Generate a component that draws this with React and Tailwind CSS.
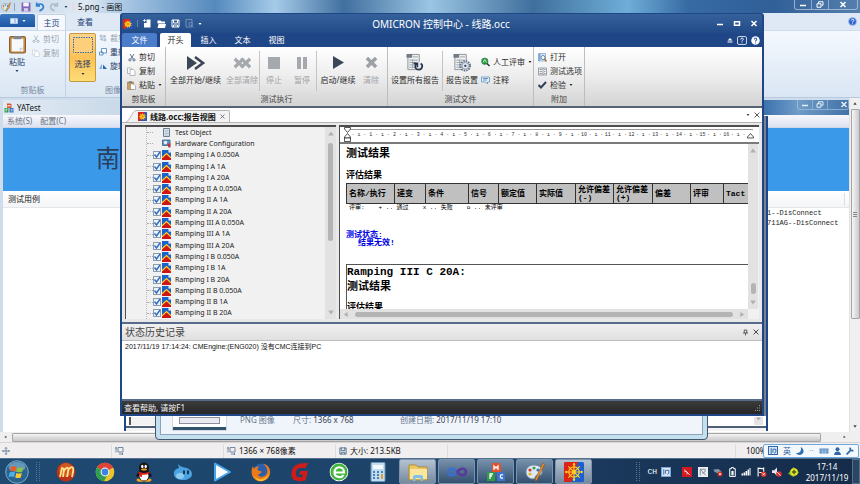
import React from "react";

const FlowerIcon = ({ className }) => (
  <svg viewBox="0 0 20 20" className={className} aria-hidden="true">
    <rect width="20" height="20" rx="1" fill="#2a52b8" />
    <path d="M0 1 Q0 0 1 0H15L5 20H1Q0 20 0 19Z" fill="#d8261c" />
    <path d="M10 2l1.600 4.200L15 3.600l-.6 4.200L18.400 8 15 10.500 18 14l-4.200-.6.2 4.400-3.200-3L8 18l-.8-4.200L3 15.400 4.800 11.400 1.500 9.500 5.600 8 4 4l4 2z" fill="#ffc61e" />
    <circle cx="10" cy="10" r="2.200" fill="#f07818" />
  </svg>
);

const WheelIcon = ({ className }) => (
  <svg viewBox="0 0 20 20" className={className} aria-hidden="true">
    <rect width="20" height="20" rx="1.500" fill="#1d5fd0" />
    <path d="M0 1.500Q0 0 1.500 0H14L7 20H1.500Q0 20 0 18.500Z" fill="#de2216" />
    <g fill="none" stroke="#ffcf20" strokeWidth="1.200">
      <circle cx="10" cy="10" r="5.200" />
      <path d="M10 2v16M2 10h16M4.300 4.300l11.400 11.400M15.700 4.300L4.300 15.700" />
    </g>
    <g fill="#ffcf20">
      <circle cx="10" cy="2.300" r="1.200" /><circle cx="10" cy="17.700" r="1.200" /><circle cx="2.300" cy="10" r="1.200" /><circle cx="17.700" cy="10" r="1.200" />
      <circle cx="10" cy="10" r="1.800" />
    </g>
  </svg>
);

const RampIcon = () => (
  <svg viewBox="0 0 18 20" className="h-[10px] w-[9px] shrink-0" aria-hidden="true">
    <path d="M0 0h13l5 5v15H0z" fill="#1763c9" />
    <path d="M13 0v5h5z" fill="#fff" />
    <path d="M0 15L9 6l9 9v5H0z" fill="#cf1616" />
    <path d="M0 15.500L9 7l9 8.500" fill="none" stroke="#ffd42a" strokeWidth="2.200" />
  </svg>
);

const CutIcon = ({ className, color = "#3d5878" }) => (
  <svg viewBox="0 0 16 16" className={className} fill="none" stroke={color} strokeWidth="1.600" aria-hidden="true">
    <path d="M4 1l6.500 10M12 1L5.500 11" />
    <circle cx="3.800" cy="12.800" r="2.200" />
    <circle cx="12" cy="12.800" r="2.200" />
  </svg>
);

const CopyIcon = ({ className, color = "#8b8f96" }) => (
  <svg viewBox="0 0 18 18" className={className} fill="#fff" stroke={color} strokeWidth="1.200" aria-hidden="true">
    <path d="M1 2h7l3 3v8H1z" />
    <path d="M6 5h7l3 3v9H6z" />
  </svg>
);

const PasteIcon = ({ className }) => (
  <svg viewBox="0 0 16 18" className={className} aria-hidden="true">
    <rect x="0.500" y="2" width="15" height="15.500" rx="1.500" fill="#c98d4c" stroke="#8a5d2c" />
    <rect x="2.500" y="4" width="11" height="12" fill="#f7fafd" />
    <path d="M4.500 1.500h7v3h-7z" fill="#7d8793" />
    <path d="M10 16l3.500-3.500H10z" fill="#c4d2e0" />
  </svg>
);

const SmallPasteIcon = ({ className }) => (
  <svg viewBox="0 0 18 18" className={className} aria-hidden="true">
    <path d="M1 2h12v15H1z" fill="#c9a15f" stroke="#8e6e38" />
    <path d="M4 1h6v3H4z" fill="#6b7480" />
    <path d="M7 6h6l4 4v7H7z" fill="#fff" stroke="#777" />
  </svg>
);

const Caret = ({ className = "" }) => (
  <svg viewBox="0 0 6 4" className={`h-[2px] w-[4px] ${className}`} fill="currentColor" aria-hidden="true">
    <path d="M0 0h6L3 4z" />
  </svg>
);

const Arrow = ({ dir, className = "h-[5px] w-[6px]" }) => {
  const d = { up: "M0 8L5 1l5 7z", down: "M0 1h10L5 8z", left: "M8 0v9L1 4.500z", right: "M2 0v9l7-4.500z" }[dir];
  return (
    <svg viewBox="0 0 10 9" className={className} fill="currentColor" aria-hidden="true">
      <path d={d} />
    </svg>
  );
};

const WinGlyph = ({ kind, className = "h-[7px] w-[8px]" }) => (
  <svg viewBox="0 0 16 14" className={className} fill="none" stroke="currentColor" strokeWidth="3" aria-hidden="true">
    {kind === "min" && <path d="M2 9h12" />}
    {kind === "max" && <path d="M3 3.500h10v7H3z" />}
    {kind === "restore" && <path d="M5 5V1.500h9v7h-3M2 5.500h8v7H2z" strokeWidth="2" />}
    {kind === "close" && <path d="M3 2l10 10M13 2L3 12" />}
  </svg>
);

const HelpBall = ({ className }) => (
  <svg viewBox="0 0 18 18" className={className} aria-hidden="true">
    <circle cx="9" cy="9" r="8" fill="#2f63cf" stroke="#b9cdf0" strokeWidth="1.500" />
    <path d="M6.500 7c0-3.600 5.400-3.200 5.200-.2C11.600 8.600 9 8.800 9 11" fill="none" stroke="#fff" strokeWidth="2" />
    <circle cx="9" cy="13.500" r="1.200" fill="#fff" />
  </svg>
);

const PaletteIcon = ({ className }) => (
  <svg viewBox="0 0 20 20" className={className} aria-hidden="true">
    <path d="M9 3c6 0 9 4 8 8-1 3-3 2-5 2s-1 4-4 4c-4 0-7-3-7-7s3-7 8-7z" fill="#dceaf6" stroke="#6d8aa6" />
    <circle cx="5" cy="8" r="1.600" fill="#d8352a" />
    <circle cx="9" cy="6" r="1.600" fill="#3aa244" />
    <circle cx="13" cy="8" r="1.600" fill="#2c6fd0" />
    <circle cx="5" cy="12" r="1.600" fill="#edb51d" />
    <path d="M18 1l1.500 1.500L12 18l-2 1 .5-2.500z" fill="#e8912c" stroke="#8b5517" strokeWidth=".6" />
  </svg>
);

const BlocksIcon = ({ className }) => (
  <svg viewBox="0 0 20 20" className={className} aria-hidden="true">
    <path d="M6 1h7l2 2v7H6z" fill="#e2502c" />
    <path d="M1 10h8v9H1z" fill="#2f9a48" />
    <path d="M11 10h7l1 1v8h-8z" fill="#3c74cf" />
    <path d="M8 8V4l2 2 2-2v4M4 17v-5h3M4 14h2M17 13c-3-2-4 4 0 3" fill="none" stroke="#fff" strokeWidth="1.300" />
  </svg>
);

const SizeIcon = ({ className }) => (
  <svg viewBox="0 0 18 18" className={className} fill="none" stroke="#4a6a8c" strokeWidth="1.500" aria-hidden="true">
    <path d="M2 13V3M0.500 5L2 2.500 3.500 5M6 3h10v9H6zM8 16h8M14 14l2 2-2 1.500" />
  </svg>
);

const DiskIcon = ({ className, color }) => (
  <svg viewBox="0 0 18 18" className={className} fill="none" stroke={color} strokeWidth="2" aria-hidden="true">
    <path d="M2 2h14v14H2zM5 2v6h8V2M5 16v-4h8v4" />
  </svg>
);

function PaintTitle() {
  return (
    <header className="flex h-[13px] shrink-0 items-center bg-[linear-gradient(90deg,#c7d9ea_0%,#dde8f2_10%,#a4c4e2_15%,#5589bd_25%,#a5cbe8_32%,#416f9f_40%,#9bc5e3_50%,#3f6f9d_62%,#6faed8_73%,#376aa3_80%,#315f98_90%,#557fae_100%)] pr-[2px] pl-px">
      <PaletteIcon className="h-[10px] w-[10px]" />
      <span className="ml-[3px] h-[8px] w-px bg-slate-400" />
      <button aria-label="保存" className="ml-[6px]">
        <svg viewBox="0 0 18 18" className="h-[10px] w-[10px]" aria-hidden="true">
          <path d="M1 1h16v16H1z" fill="#8163b8" />
          <path d="M4 1h10v7H4z" fill="#f4f2fb" />
          <path d="M5 11h8v6H5z" fill="#d4c9e8" />
        </svg>
      </button>
      <button aria-label="撤销" className="ml-[4px]">
        <svg viewBox="0 0 18 18" className="h-[10px] w-[10px]" fill="none" stroke="#2f7fd4" strokeWidth="3" aria-hidden="true">
          <path d="M3 1v6h6M3 6c7-5 13-1 12 4-1 4-4 5-7 6" />
        </svg>
      </button>
      <button aria-label="重做" className="ml-[4px]">
        <svg viewBox="0 0 18 18" className="h-[10px] w-[10px]" fill="none" stroke="#aebccb" strokeWidth="3" aria-hidden="true">
          <path d="M15 1v6H9M15 6C8 1 2 5 3 10c1 4 4 5 7 6" />
        </svg>
      </button>
      <button aria-label="自定义快速访问工具栏" className="ml-[5px] text-slate-700">
        <Caret />
      </button>
      <span className="ml-[5px] h-[8px] w-px bg-rose-200" />
      <h1 className="ml-[4px] whitespace-nowrap text-[#111]">5.png - 画图</h1>
      <div className="ml-auto flex h-[10px] w-[64px] self-start rounded-b-[3px] border border-t-0 border-[#bcd0e6]/70 text-white">
        <button aria-label="最小化" className="flex flex-1 items-center justify-center border-r border-[#bcd0e6]/60"><WinGlyph kind="min" /></button>
        <button aria-label="还原" className="flex flex-1 items-center justify-center border-r border-[#bcd0e6]/60"><WinGlyph kind="restore" /></button>
        <button aria-label="关闭" className="flex w-[28px] items-center justify-center"><WinGlyph kind="close" /></button>
      </div>
    </header>
  );
}

function PaintRibbon() {
  return (
    <>
      <nav className="flex h-[18px] shrink-0 items-end border-b border-[#cddcec] bg-[#dfe9f5]">
        <button aria-label="画图菜单" className="mb-[3px] flex h-[13px] w-[35px] items-center justify-center gap-[4px] self-end rounded-t-[2px] bg-gradient-to-b from-[#3b78c0] to-[#1d56a3] text-white">
          <svg viewBox="0 0 16 12" className="h-[6px] w-[8px]" fill="#dcebfb" aria-hidden="true"><path d="M0 0h16v12H0zM10 2v8" stroke="#5d8cc0" strokeWidth="1.500" /></svg>
          <Caret />
        </button>
        <button className="ml-[2px] h-[16px] w-[29px] rounded-t-[2px] border border-b-0 border-[#c3d3e6] bg-[#f5f9fe] text-[#1e3f77]">主页</button>
        <button className="ml-[4px] h-[16px] w-[30px] text-[#1e3f77]">查看</button>
        <button aria-label="帮助" className="mr-[3px] ml-auto self-center"><HelpBall className="h-[9px] w-[9px]" /></button>
      </nav>
      <div className="flex h-[67px] shrink-0 overflow-hidden border-b border-[#b7c9de] bg-gradient-to-b from-[#f5f9fe] via-[#e6eff9] to-[#dbe6f4] text-[#1e3a63]">
        <section className="flex w-[66px] shrink-0 flex-col border-r border-[#c4d2e2]">
          <div className="flex flex-1 gap-[3px] pt-[3px] pl-[5px]">
            <button className="flex w-[24px] flex-col items-center gap-[3px]">
              <PasteIcon className="h-[20px] w-[17px]" />
              <span className="whitespace-nowrap">粘贴</span>
              <Caret />
            </button>
            <div className="flex flex-col gap-[4px] text-[#9aa3ae]">
              <button className="flex h-[10px] items-center gap-[3px] whitespace-nowrap" disabled><CutIcon className="h-[8px] w-[8px]" color="#9fb0c2" />剪切</button>
              <button className="flex h-[10px] items-center gap-[3px] whitespace-nowrap" disabled><CopyIcon className="h-[8px] w-[8px]" color="#b4bfcb" />复制</button>
            </div>
          </div>
          <span className="pb-[2px] text-center text-[#7487a0]">剪贴板</span>
        </section>
        <section className="flex w-[59px] shrink-0 flex-col overflow-hidden">
          <div className="flex flex-1 gap-[3px] pt-[2px] pl-[3px]">
            <button className="flex h-[49px] w-[27px] shrink-0 flex-col items-center gap-[4px] rounded-[2px] border border-[#c79a3d] bg-gradient-to-b from-[#fbd48c] via-[#fcc257] to-[#fddc76] pt-[3px]">
              <svg viewBox="0 0 20 16" className="h-[16px] w-[20px] shrink-0" aria-hidden="true"><rect x=".5" y=".5" width="19" height="15" fill="#fdcf7d" stroke="#3b6ea8" strokeDasharray="1.500 1" /></svg>
              <span className="mt-[2px] whitespace-nowrap">选择</span>
              <Caret />
            </button>
            <div className="flex flex-col gap-[4px]">
              <button className="flex h-[10px] items-center gap-[3px] whitespace-nowrap text-[#9aa3ae]" disabled>
                <svg viewBox="0 0 16 16" className="h-[8px] w-[8px]" fill="none" stroke="#8fa3b8" strokeWidth="1.500" aria-hidden="true"><path d="M4 1v11h11M1 4h11v11M4 12L13 2" /></svg>裁剪
              </button>
              <button className="flex h-[10px] items-center gap-[3px] whitespace-nowrap">
                <svg viewBox="0 0 16 16" className="h-[8px] w-[8px]" fill="#fff" stroke="#3f78b5" strokeWidth="1.500" aria-hidden="true"><path d="M5 1h10v9H5zM1 8h7v6H1z" /></svg>重新
              </button>
              <button className="flex h-[10px] items-center gap-[3px] whitespace-nowrap">
                <svg viewBox="0 0 16 16" className="h-[8px] w-[8px]" aria-hidden="true"><path d="M0 14L6 3v11z" fill="#7fb2e2" /><path d="M8 14V5l8 9z" fill="#2b66a6" /></svg>旋转
              </button>
            </div>
          </div>
          <span className="pb-[2px] pl-[39px] whitespace-nowrap text-[#7487a0]">图像</span>
        </section>
      </div>
    </>
  );
}

function YaTest() {
  return (
    <section className="flex min-w-0 flex-1 flex-col bg-white">
      <header className="flex h-[15px] shrink-0 items-center bg-[linear-gradient(90deg,#e2ebf4_0%,#c9d9e8_14%,#6c9bca_50%,#3d73ae_90%,#6f9cc8_94%,#4272a8_100%)] pl-[1px]">
        <BlocksIcon className="h-[10px] w-[10px]" />
        <h2 className="ml-[3px] text-[#151515]">YATest</h2>
        <div className="ml-auto flex h-[10px] w-[52px] self-start rounded-b-[3px] border border-t-0 border-[#a9c1da]/70 text-[#e6eef7]">
          <button aria-label="最小化" className="flex flex-1 items-center justify-center"><WinGlyph kind="min" /></button>
          <button aria-label="还原" className="flex flex-1 items-center justify-center border-x border-[#a9c1da]/60"><WinGlyph kind="restore" /></button>
          <button aria-label="关闭" className="flex w-[20px] items-center justify-end"><WinGlyph kind="close" /></button>
        </div>
      </header>
      <nav className="flex h-[13px] shrink-0 items-center gap-[8px] border-b border-[#cfd5e8] bg-gradient-to-b from-[#f7f8fd] to-[#dde2f1] pl-[4px] text-[#6d7480]">
        <button>系统(S)</button>
        <button>配置(C)</button>
      </nav>
      <div className="flex h-[63px] shrink-0 items-center bg-[#3a99e9] pb-[6px] pl-[93px] font-['Noto_Sans_CJK_SC',sans-serif] text-[24px] text-[#2b3f5c]">南</div>
      <div className="flex h-[17px] shrink-0 items-center border-b border-[#e3e6ea] bg-gradient-to-b from-white to-[#f4f5f7] pl-[5px] text-[#111]">
        测试用例
        <span className="mr-[4px] ml-auto h-[13px] w-px bg-[#dcdfe4]" />
      </div>
      <ul className="flex w-[84px] flex-col self-end font-['Liberation_Mono',monospace] text-[7px] leading-[10px] text-[#222]">
        <li className="pl-[2px]">1--DisConnect</li>
        <li className="pl-[2px]">711AG--DisConnect</li>
      </ul>
    </section>
  );
}

function PaintWindow() {
  return (
    <div className="flex min-h-0 flex-1 flex-col bg-[#c8d4e4]">
      <PaintTitle />
      <PaintRibbon />
      <div className="flex min-h-0 flex-1">
        <div className="flex min-w-0 flex-1 border-t-2 border-l-[3px] border-[#cfdcec]"><YaTest /></div>
        <div className="flex w-[11px] flex-col items-center border-l border-[#e2e2e2] bg-[#f0f0f0] py-[4px] text-[#444]">
          <Arrow dir="up" className="h-[3px] w-[4px]" />
          <div className="mt-[4px] flex h-[210px] w-[9px] flex-col items-center justify-center gap-px rounded-[1px] border border-[#a5a5a5] bg-gradient-to-r from-[#f6f6f6] to-[#cbcbcf]">
            <span className="h-px w-[4px] bg-[#888]" /><span className="h-px w-[4px] bg-[#888]" /><span className="h-px w-[4px] bg-[#888]" />
          </div>
          <Arrow dir="down" className="mt-auto h-[3px] w-[4px]" />
        </div>
      </div>
      <div className="flex h-[10px] shrink-0 items-center bg-[#efefef] pl-[4px] text-[#444]">
        <Arrow dir="left" className="h-[4px] w-[3px]" />
        <div className="ml-[5px] h-[9px] flex-1 rounded-[1px] border border-[#a5a5a5] bg-gradient-to-b from-[#f5f5f5] to-[#c6c6c9]" />
        <Arrow dir="right" className="mr-[14px] ml-[22px] h-[4px] w-[3px]" />
      </div>
      <footer className="flex h-[16px] shrink-0 items-center border-t border-[#d7d5d5] bg-[#f0eeee] text-[#111]">
        <div className="flex h-[14px] w-[112px] items-center border-r border-[#dedcdc] pl-[2px]">
          <svg viewBox="0 0 16 16" className="h-[8px] w-[8px]" fill="none" stroke="#4a6a8c" strokeWidth="1.500" aria-hidden="true"><path d="M8 1v14M1 8h14M6 3l2-2 2 2M6 13l2 2 2-2M3 6L1 8l2 2M13 6l2 2-2 2" /></svg>
        </div>
        <div className="flex h-[14px] w-[112px] items-center border-r border-[#dedcdc] pl-[3px]"><SizeIcon className="h-[9px] w-[9px]" /></div>
        <div className="flex h-[14px] w-[112px] items-center gap-[3px] border-r border-[#dedcdc] pl-[3px]"><SizeIcon className="h-[9px] w-[9px]" />1366 × 768像素</div>
        <div className="flex h-[14px] w-[112px] items-center gap-[3px] border-r border-[#dedcdc] pl-[3px]"><DiskIcon className="h-[8px] w-[8px]" color="#4a6a8c" />大小: 213.5KB</div>
        <div className="ml-auto flex h-[14px] w-[28px] items-center justify-end border-l border-[#dedcdc]"><span className="w-[17px] overflow-hidden">100%</span></div>
        <div className="mr-px flex h-[14px] w-[96px] items-center justify-between rounded-[2px] border border-[#6fa8dc] bg-[#f3f8fd] px-[4px] text-[#2a5f9e]">
          <span className="flex h-[9px] w-[10px] items-center justify-center border border-[#2f66a8] bg-[#d6e6f6]">
            <svg viewBox="0 0 12 10" className="h-[6px] w-[7px]" fill="none" stroke="#2a5f9e" strokeWidth="1.500" aria-hidden="true"><path d="M2 0v10M5 2h5v5L7 9M5 2v6" /></svg>
          </span>
          <span>英</span>
          <svg viewBox="0 0 12 12" className="h-[8px] w-[8px]" fill="#2f6db3" aria-hidden="true"><path d="M7 0c6 3 6 11-1 12-3 0-5-1-6-3 5 1 9-3 7-9z" /></svg>
          <span className="text-[#9ab]">··</span>
          <svg viewBox="0 0 18 12" className="h-[6px] w-[10px]" fill="#5c8fc4" aria-hidden="true"><path d="M0 1h18v10H0z" /><path d="M2 4h14M2 6.500h14M5 9h8" stroke="#fff" strokeDasharray="2 1" /></svg>
          <svg viewBox="0 0 12 14" className="h-[8px] w-[7px]" fill="#2f66a8" aria-hidden="true"><circle cx="6" cy="4" r="3.500" /><path d="M0 14c0-8 12-8 12 0z" /></svg>
          <svg viewBox="0 0 14 14" className="h-[8px] w-[8px]" fill="none" stroke="#2f66a8" strokeWidth="3" aria-hidden="true"><path d="M1 13l7-7M8 1c-2 4 1 6 5 5" /></svg>
        </div>
      </footer>
    </div>
  );
}

const BigButton = ({ label, icon, className, disabled }) => (
  <button disabled={disabled} className={`flex flex-col items-center gap-[3px] pt-[6px] whitespace-nowrap ${disabled ? "text-[#a0a3a8]" : "text-[#2b2b2b]"} ${className}`}>
    <span className="flex h-[19px] items-center">{icon}</span>
    <span>{label}</span>
  </button>
);

const SmallButton = ({ label, icon, caret }) => (
  <button className="flex h-[12px] items-center gap-[3px] whitespace-nowrap text-[#2b2b2b]">
    <span className="flex w-[9px] justify-center">{icon}</span>
    {label}
    {caret && <Caret />}
  </button>
);

const Sep = () => <span className="mt-[4px] h-[40px] w-px bg-[#c4c4c4]" />;

const Group = ({ label, className, children }) => (
  <section className={`flex shrink-0 flex-col border-r border-[#bdbdbd] ${className}`}>
    <div className="flex min-h-0 flex-1">{children}</div>
    <h3 className="pb-[2px] text-center text-[#444]">{label}</h3>
  </section>
);

const XShape = ({ x = 0 }) => <path d={`M${x + 2} 5l3-3 4 4 4-4 3 3-4 4 4 4-3 3-4-4-4 4-3-3 4-4z`} />;

const ReportGlyph = ({ gear }) => (
  <svg viewBox="0 0 20 20" className="h-[19px] w-[20px]" fill="none" aria-hidden="true">
    <path d="M2.500 1.500h12v16h-12z" fill="#eceef0" stroke="#8d939a" />
    <path d="M1 1h6v4H1z" fill="#747b84" />
    <path d="M8 4h5M4 7.500h9M4 10h9M4 12.500h9M4 15h9M7.500 7v9" stroke="#8d939a" strokeWidth=".8" />
    {gear ? (
      <g>
        <circle cx="13.500" cy="13.500" r="5" fill="#eef1f4" stroke="#5c6f84" strokeWidth="2" strokeDasharray="1.600 1" />
        <circle cx="13.500" cy="13.500" r="3.500" fill="#dfe6ed" stroke="#5c6f84" strokeWidth=".6" />
        <circle cx="13.500" cy="13.500" r="1.200" fill="#26384e" />
      </g>
    ) : (
      <g>
        <circle cx="14" cy="14" r="5" fill="#e8eaec" />
        <path d="M16 11c3 2 1.500 6.500-2 6.500-4 0-5-4-2.500-6.500M8.500 11h4v4" stroke="#26384e" strokeWidth="1.800" />
      </g>
    )}
  </svg>
);

function OmicronRibbon() {
  return (
    <div className="flex h-[59px] shrink-0 overflow-hidden bg-gradient-to-b from-white via-[#ededed] to-[#d3d3d3]">
      <Group label="剪贴板" className="w-[44px]">
        <div className="flex flex-col gap-[2px] pt-[4px] pl-[5px]">
          <SmallButton label="剪切" icon={<CutIcon className="h-[9px] w-[8px]" />} />
          <SmallButton label="复制" icon={<CopyIcon className="h-[9px] w-[9px]" />} />
          <SmallButton label="粘贴" caret icon={<SmallPasteIcon className="h-[9px] w-[9px]" />} />
        </div>
      </Group>
      <Group label="测试执行" className="w-[222px]">
        <BigButton label="全部开始/继续" className="w-[59px]" icon={<svg viewBox="0 0 20 14" className="h-[14px] w-[20px]" aria-hidden="true"><path d="M1 0l10 7-10 7z" fill="#3b4757" /><path d="M9 1l8 6-8 6" fill="none" stroke="#3b4757" strokeWidth="2.600" /></svg>} />
        <BigButton disabled label="全部清除" className="w-[34px]" icon={<svg viewBox="0 0 26 18" className="h-[14px] w-[20px]" fill="#a5a9ae" aria-hidden="true"><XShape /><XShape x={9} /></svg>} />
        <Sep />
        <BigButton disabled label="停止" className="w-[28px]" icon={<svg viewBox="0 0 12 12" className="h-[12px] w-[12px]" aria-hidden="true"><path d="M0 0h12v12H0z" fill="#a5a9ae" /></svg>} />
        <BigButton disabled label="暂停" className="w-[28px]" icon={<svg viewBox="0 0 10 12" className="h-[12px] w-[10px]" aria-hidden="true"><path d="M0 0h4v12H0zM6 0h4v12H6z" fill="#a5a9ae" /></svg>} />
        <Sep />
        <BigButton label="启动/继续" className="w-[42px]" icon={<svg viewBox="0 0 12 14" className="h-[13px] w-[11px]" aria-hidden="true"><path d="M0 0l12 7-12 7z" fill="#3b4757" /></svg>} />
        <BigButton disabled label="清除" className="w-[24px]" icon={<svg viewBox="0 0 18 18" className="h-[15px] w-[15px]" fill="#9da1a6" aria-hidden="true"><XShape /></svg>} />
      </Group>
      <Group label="测试文件" className="w-[146px]">
        <BigButton label="设置所有报告" className="w-[54px]" icon={<ReportGlyph />} />
        <Sep />
        <BigButton label="报告设置" className="w-[38px]" icon={<ReportGlyph gear />} />
        <div className="flex flex-col gap-[6px] pt-[9px]">
          <SmallButton label="人工评审" caret icon={<svg viewBox="0 0 18 18" className="h-[10px] w-[10px]" fill="none" aria-hidden="true"><circle cx="7.500" cy="7.500" r="6.500" fill="#2d9a45" stroke="#1b7431" /><path d="M4 10l3.500-6L11 10" stroke="#d7f3dc" strokeWidth="1.800" /><path d="M12 12l5 5" stroke="#333" strokeWidth="3" /></svg>} />
          <SmallButton label="注释" icon={<svg viewBox="0 0 18 16" className="h-[9px] w-[10px]" aria-hidden="true"><path d="M1 1h16v10h-4v4l-4-4H1z" fill="#e7f1fb" stroke="#5b8cc0" strokeWidth="1.500" /><path d="M4 4h10M4 7h8" stroke="#3f77b2" strokeWidth="1.500" /></svg>} />
        </div>
      </Group>
      <Group label="附加" className="w-[51px]">
        <div className="flex flex-col gap-[2px] pt-[4px] pl-[4px]">
          <SmallButton label="打开" icon={<svg viewBox="0 0 18 18" className="h-[9px] w-[9px]" fill="none" aria-hidden="true"><path d="M1 1h14v15H1z" fill="#d8e8f6" stroke="#4d80b4" /><path d="M1 1h4v15H1z" fill="#78a9d8" /><circle cx="10" cy="9" r="4" fill="#fff" stroke="#44617e" strokeWidth="1.500" /><path d="M13 12l4 5" stroke="#a0672c" strokeWidth="2.500" /></svg>} />
          <SmallButton label="测试选项" icon={<svg viewBox="0 0 18 18" className="h-[9px] w-[9px]" fill="none" stroke="#777f89" strokeWidth="1.400" aria-hidden="true"><path d="M1 2h16v14H1zM10 2v14M3 5h5M3 9h5M3 13h5M12 5h3M12 9h3M12 13h3" /></svg>} />
          <SmallButton label="检验" caret icon={<svg viewBox="0 0 18 16" className="h-[8px] w-[9px]" fill="none" stroke="#334055" strokeWidth="4" aria-hidden="true"><path d="M1 8l5 5L16 2" /></svg>} />
        </div>
      </Group>
    </div>
  );
}

const treeItems = [
  "Ramping I A 0.050A", "Ramping I A 1A", "Ramping I A 20A",
  "Ramping II A 0.050A", "Ramping II A 1A", "Ramping II A 20A",
  "Ramping III A 0.050A", "Ramping III A 1A", "Ramping III A 20A",
  "Ramping I B 0.050A", "Ramping I B 1A", "Ramping I B 20A",
  "Ramping II B 0.050A", "Ramping II B 1A", "Ramping II B 20A",
];

function Tree() {
  return (
    <aside className="flex w-[211px] shrink-0 border-t-2 border-l border-[#4d4d4d] bg-[#f1f1f1]">
      <ul className="ml-[20px] flex flex-1 flex-col border-l border-dotted border-[#bbb] text-[7px] text-[#1a1a1a]">
        <li className="flex min-h-0 flex-1 items-center">
          <span className="mr-[9px] w-[6px] border-t border-dotted border-[#aaa]" />
          <svg viewBox="0 0 14 18" className="mr-[5px] ml-px h-[9px] w-[7px]" aria-hidden="true"><path d="M1 1h12v16H1z" fill="#d9e6ef" stroke="#6d7f8e" strokeWidth="2" /><path d="M3 5h8M3 8h8M3 11h8M3 14h8" stroke="#8fa2b2" /></svg>
          Test Object
        </li>
        <li className="flex min-h-0 flex-1 items-center">
          <span className="mr-[9px] w-[6px] border-t border-dotted border-[#aaa]" />
          <svg viewBox="0 0 18 18" className="mr-[4px] h-[9px] w-[9px]" aria-hidden="true"><path d="M1 2h15v11H1z" fill="#5d95c9" stroke="#33597f" strokeWidth="1.500" /><circle cx="7" cy="7" r="3.500" fill="#e9f3fb" /><path d="M10 9h7v8h-4z" fill="#bf3440" /></svg>
          Hardware Configuration
        </li>
        {treeItems.map((t) => (
          <li key={t} className="flex min-h-0 flex-1 items-center">
            <span className="w-[6px] border-t border-dotted border-[#aaa]" />
            <label className="flex items-center whitespace-nowrap">
              <span className="relative mr-px flex">
                <input type="checkbox" defaultChecked className="h-[8px] w-[8px] appearance-none border border-[#8f9cab] bg-[#eef3f8]" />
                <svg viewBox="0 0 16 16" className="pointer-events-none absolute inset-0 h-[8px] w-[8px]" fill="none" stroke="#2f6ec4" strokeWidth="2.800" aria-hidden="true"><path d="M3 7l4 5 7-10" /></svg>
              </span>
              <RampIcon />
              <span className="ml-[4px]">{t}</span>
            </label>
          </li>
        ))}
      </ul>
      <div className="flex w-[11px] flex-col items-center bg-[#e2e2e2] py-[4px] text-[#b0b0b0]">
        <Arrow dir="up" />
        <div className="mt-[7px] h-[98px] w-[5px] rounded-full bg-[#b4b4b4]" />
        <Arrow dir="down" className="mt-auto h-[5px] w-[6px]" />
      </div>
    </aside>
  );
}

const columns = [
  ["名称/执行", "w-[48px]"], ["递变", "w-[31px]"], ["条件", "w-[43px]"], ["信号", "w-[30px]"],
  ["额定值", "w-[38px]"], ["实际值", "w-[39px]"], ["允许偏差 (-)", "w-[38px]"], ["允许偏差 (+)", "w-[39px]"],
  ["偏差", "w-[38px]"], ["评审", "w-[33px]"], ["Tact", "w-[29px]"],
];

const Marker = ({ right }) => (
  <svg viewBox="0 0 14 30" className={`absolute top-0 h-[15px] w-[7px] ${right ? "right-[5px]" : "left-[4px]"}`} fill="#fff" stroke="#222" strokeWidth="1.500" aria-hidden="true">
    {!right && <path d="M1 1h12v3L7 11 1 4z" />}
    <path d="M7 13l6 7v2H1v-2z" />
    {!right && <path d="M1 22h12v7H1z" />}
  </svg>
);

function Report() {
  return (
    <main className="flex min-w-0 flex-1 flex-col overflow-hidden border-t-2 border-l border-[#4d4d4d] bg-[#f1f1f1] font-['Liberation_Mono','Noto_Sans_CJK_SC',monospace] text-black">
      <div className="relative shrink-0 border-b-2 border-[#7a7a7a] bg-white py-[2px] pr-[6px] pl-[8px]">
        <div className="flex h-[11px] items-center border-t border-[#999] pl-[2px] text-[5px] leading-[8px] text-[#333]">
          {Array.from({ length: 17 }, (_, i) => (
            <div key={i} className="grid flex-1 grid-cols-4 text-center">
              <span>·</span><span>ı</span><span>·</span><span>{i < 16 ? i + 1 : ""}</span>
            </div>
          ))}
        </div>
        <Marker />
        <Marker right />
      </div>
      <div className="flex min-h-0 flex-1">
        <article className="flex min-w-0 flex-1 flex-col overflow-hidden bg-white pl-[6px]">
          <h2 className="mt-[3px] text-[11px] leading-[14px] font-bold">测试结果</h2>
          <h3 className="mt-[10px] text-[9px] leading-[11px] font-bold">评估结果</h3>
          <table className="mt-[1px] w-[406px] shrink-0 table-fixed border-collapse bg-[#c0c0c0] text-left leading-[8px]">
            <thead>
              <tr className="h-[20px]">
                {columns.map(([c, w]) => (
                  <th key={c} scope="col" className={`border border-[#333] p-0 pl-[2px] font-bold ${w}`}>{c}</th>
                ))}
              </tr>
            </thead>
          </table>
          <p className="flex gap-[14px] pl-[3px] text-[6px] leading-[8px]">
            <span>评审:</span><span>+ .. 通过</span><span>x .. 失败</span><span>o .. 未评审</span>
          </p>
          <p className="mt-[19px] leading-[8px] font-bold text-[#0000e6]">测试状态:</p>
          <p className="pl-[12px] leading-[8px] font-bold text-[#0000e6]">结果无效!</p>
          <section className="mt-[17px] min-h-0 flex-1 border-t border-l border-[#555]">
            <h2 className="text-[11px] leading-[15px] font-bold">Ramping III C 20A:</h2>
            <h2 className="text-[11px] leading-[14px] font-bold">测试结果</h2>
            <h3 className="mt-[9px] text-[9px] leading-[11px] font-bold">评估结果</h3>
          </section>
        </article>
        <div className="mr-px flex w-[10px] flex-col items-center bg-[#e2e2e2] py-[4px] text-[#b0b0b0]">
          <Arrow dir="up" />
          <div className="mt-auto h-[11px] w-[5px] rounded-full bg-[#b4b4b4]" />
          <Arrow dir="down" className="mt-[6px] h-[5px] w-[6px]" />
        </div>
      </div>
      <div className="mr-[11px] flex h-[10px] shrink-0 items-center bg-[#e2e2e2] px-[3px] text-[#b0b0b0]">
        <Arrow dir="left" />
        <div className="mx-[6px] h-[5px] flex-1 rounded-full bg-[#b4b4b4]" />
        <Arrow dir="right" />
      </div>
    </main>
  );
}

function OmicronWindow() {
  return (
    <div className="absolute top-[13px] right-[96px] bottom-[68px] left-[120px] flex flex-col overflow-hidden rounded-t-[3px] border-2 border-t border-[#1f4687] bg-[#1f4687]">
      <header className="flex h-[19px] shrink-0 items-center bg-gradient-to-b from-[#35619b] to-[#214b88] pl-[1px] text-white">
        <FlowerIcon className="h-[10px] w-[10px]" />
        <span className="ml-[4px] h-[7px] w-px bg-[#6285b5]" />
        <button aria-label="新建" className="ml-[5px]"><svg viewBox="0 0 16 18" className="h-[9px] w-[8px]" fill="#fff" aria-hidden="true"><path d="M7 1h8v16H2V8h5z" /><path d="M3 0v6M0 3h6" stroke="#fff" strokeWidth="1.500" /></svg></button>
        <button aria-label="打开" className="ml-[6px]"><svg viewBox="0 0 18 16" className="h-[8px] w-[9px]" fill="#fff" aria-hidden="true"><path d="M1 1h6l2 2h7v4H1zM3 8h15l-2 8H1z" /></svg></button>
        <button aria-label="保存" className="ml-[5px]"><DiskIcon className="h-[9px] w-[9px]" color="#fff" /></button>
        <button aria-label="预览" className="ml-[5px]"><svg viewBox="0 0 18 18" className="h-[9px] w-[9px]" fill="none" stroke="#7391bb" strokeWidth="2" aria-hidden="true"><path d="M2 1h12v15H2z" /><circle cx="11" cy="10" r="3.500" /><path d="M13 13l4 4" /></svg></button>
        <button aria-label="更多" className="ml-[4px]"><Caret /></button>
        <h1 className="flex-1 pr-[36px] text-center text-[10px] leading-[14px]">OMICRON 控制中心 - 线路.occ</h1>
        <div className="mr-[4px] flex gap-[9px]">
          <button aria-label="最小化"><WinGlyph kind="min" /></button>
          <button aria-label="最大化"><WinGlyph kind="max" /></button>
          <button aria-label="关闭"><WinGlyph kind="close" /></button>
        </div>
      </header>
      <nav className="flex h-[14px] shrink-0 text-white">
        <button className="w-[35px] rounded-t-[2px] bg-[#4a7cc9]">文件</button>
        <button className="ml-[3px] w-[31px] rounded-t-[2px] bg-white text-[#222]">开头</button>
        <button className="ml-[1px] w-[33px]">插入</button>
        <button className="ml-[1px] w-[33px]">文本</button>
        <button className="ml-[1px] w-[33px]">视图</button>
        <div className="mr-[2px] ml-auto flex items-center gap-[4px]">
          <button aria-label="折叠功能区"><svg viewBox="0 0 12 12" className="h-[6px] w-[6px]" fill="#fff" aria-hidden="true"><path d="M1 7l5-5 5 5zM1 9h10v2H1z" /></svg></button>
          <button aria-label="上下文帮助"><svg viewBox="0 0 20 18" className="h-[9px] w-[10px]" fill="none" stroke="#fff" strokeWidth="1.500" aria-hidden="true"><rect x="1" y="1" width="18" height="16" rx="3" /><path d="M7.500 7c0-4 5-3.500 5-.5C12.500 8.500 10 8.500 10 11M10 13v1.500" strokeWidth="2" /></svg></button>
          <button aria-label="帮助"><svg viewBox="0 0 18 18" className="h-[9px] w-[9px]" aria-hidden="true"><circle cx="9" cy="9" r="8.500" fill="#fff" /><path d="M6.500 7c0-4 5-3.500 5-.5C11.500 8.500 9 8.500 9 11M9 13v2" fill="none" stroke="#2f63b0" strokeWidth="2.200" /></svg></button>
        </div>
      </nav>
      <OmicronRibbon />
      <div className="flex h-[16px] shrink-0 border-t-2 border-[#566373] bg-white">
        <div className="mt-[2px] flex">
          <svg viewBox="0 0 12 12" preserveAspectRatio="none" className="ml-[4px] h-full w-[10px]" aria-hidden="true"><path d="M0 12C5 11 7 1 12 .5V12z" fill="#f3f3f3" /><path d="M0 12C5 11 7 1 12 .5" fill="none" stroke="#b4b4b4" /></svg>
          <div className="flex items-center gap-[3px] rounded-tr-[2px] border-t border-r border-[#b4b4b4] bg-[#f3f3f3] pr-[4px] pl-[2px] font-bold whitespace-nowrap text-[#111]">
            <FlowerIcon className="h-[9px] w-[9px]" />
            线路.occ:报告视图
            <button aria-label="关闭标签" className="ml-[1px] text-[#555]"><svg viewBox="0 0 10 10" className="h-[5px] w-[5px]" stroke="currentColor" strokeWidth="1.500" aria-hidden="true"><path d="M1 1l8 8M9 1L1 9" /></svg></button>
          </div>
        </div>
        <div className="mr-[2px] ml-auto flex items-center gap-[4px] text-[#444]">
          <button aria-label="标签列表"><Caret /></button>
          <button aria-label="关闭"><svg viewBox="0 0 10 10" className="h-[6px] w-[6px]" stroke="currentColor" strokeWidth="1.500" aria-hidden="true"><path d="M1 1l8 8M9 1L1 9" /></svg></button>
        </div>
      </div>
      <div className="flex min-h-0 flex-1 gap-[3px] border-t border-[#b4b4b4] bg-[#e9e9e9] px-[3px] pt-[2px] pb-[3px]">
        <Tree />
        <Report />
      </div>
      <section className="flex h-[79px] shrink-0 flex-col border-t-2 border-b-2 border-[#566b8a] bg-white">
        <header className="flex h-[17px] shrink-0 items-center border-b border-[#bdbdbd] bg-gradient-to-b from-[#f0f0f0] to-[#e0e0e0] pr-[3px] pl-[3px] text-[10px] text-[#444]">
          <h2>状态历史记录</h2>
          <button aria-label="固定" className="mr-[5px] ml-auto"><svg viewBox="0 0 10 12" className="h-[7px] w-[5px]" fill="none" stroke="#333" strokeWidth="1.500" aria-hidden="true"><path d="M2.500 1h5v6M2.500 1v6M0 7h10M5 7v5" /></svg></button>
          <button aria-label="关闭"><svg viewBox="0 0 10 10" className="h-[6px] w-[6px]" stroke="#333" strokeWidth="1.500" aria-hidden="true"><path d="M1 1l8 8M9 1L1 9" /></svg></button>
        </header>
        <p className="pl-[3px] font-['Liberation_Sans','Noto_Sans_CJK_SC',sans-serif] text-[7px] leading-[12px] text-[#111]">2017/11/19 17:14:24: CMEngine:(ENG020) 没有CMC连接到PC</p>
      </section>
      <footer className="flex h-[13px] shrink-0 items-center bg-gradient-to-b from-[#3c3c3c] to-[#262626] pl-[2px] text-[#f2f2f2]">
        查看帮助, 请按F1
        <svg viewBox="0 0 16 16" className="mr-px ml-auto h-[8px] w-[8px]" fill="#999" aria-hidden="true"><path d="M12 2h2v2h-2zM8 7h2v2H8zM12 7h2v2h-2zM4 12h2v2H4zM8 12h2v2H8zM12 12h2v2h-2z" /></svg>
      </footer>
    </div>
  );
}

function BackWindow() {
  return (
    <div className="absolute top-[116px] right-[92px] bottom-[53px] left-[124px] flex flex-col justify-end border-x-2 border-[#1f4687] bg-[#77818f]">
      <div className="flex h-[10px] items-center justify-between bg-white">
        <span className="ml-[3px] h-[8px] w-[28px] border-l-2 border-r border-[#555] border-r-[#ccc] bg-[#f2f2f2]" />
        <span className="mr-[3px] flex h-[8px] w-[9px] justify-center bg-[#e4e4e4] text-[#aaa]"><Arrow dir="down" className="h-[4px] w-[5px]" /></span>
      </div>
      <div className="h-[5px] border-t-2 border-[#4f5f78] bg-[#f4f4f4]" />
    </div>
  );
}

function ExplorerWindow() {
  return (
    <div className="absolute right-[152px] bottom-[44px] left-[155px] flex h-[40px] flex-col rounded-[4px] border border-[#42566b] bg-gradient-to-b from-[#c6dff0] to-[#c3e0ef] px-[4px] pb-[4px]">
      <div className="flex flex-1 items-end border border-[#8da3b8] bg-[#f0f4fb] pl-[11px] text-[#64748b]">
        <div className="mb-[3px] flex h-[22px] w-[55px] flex-col justify-end border border-[#d4d8de] bg-white pl-[6px]">
          <span className="mr-[6px] mb-[3px] h-[7px] border border-[#8c8ea0] bg-[#e9e9f0]" />
          <span className="-ml-[6px] h-[3px] bg-[#31546e]" />
        </div>
        <div className="mb-[8px] flex flex-1 leading-[12px] whitespace-nowrap">
          <span className="ml-[13px] w-[53px]">PNG 图像</span>
          <span className="w-[107px]">尺寸: <span className="text-[#3b4656]">1366 x 768</span></span>
          <span>创建日期: <span className="text-[#3b4656]">2017/11/19 17:10</span></span>
        </div>
      </div>
    </div>
  );
}

const Grip = () => (
  <svg viewBox="0 0 6 20" className="h-[20px] w-[6px]" aria-hidden="true"><path d="M1.500 0v20M4.500 0v20" stroke="#5a7596" strokeWidth="1" strokeDasharray="1 1" /></svg>
);

const launchers = [
  ["迈迪", <><circle cx="10" cy="10" r="9.500" fill="#b8321a" /><circle cx="10" cy="8" r="7" fill="#dc6a22" opacity=".7" /><path d="M4 15L6 6l2 1-1 8M8 9c3-5 5-4 4 1l-1 5M12 8c4-5 6-3 5 2l-1 5" fill="none" stroke="#ffe38a" strokeWidth="1.800" /></>],
  ["Chrome", <><circle cx="10" cy="10" r="9.300" fill="#e8c52c" /><path d="M10 10L2 5.300A9.300 9.300 0 0 1 18.200 5.600z" fill="#db4437" /><path d="M10 10L2 5.300A9.300 9.300 0 0 0 9 19.250l4-7.500z" fill="#2f9e50" /><circle cx="10" cy="10" r="4.400" fill="#fff" /><circle cx="10" cy="10" r="3.400" fill="#3d82e6" /></>],
  ["QQ", <><ellipse cx="6.500" cy="18" rx="4" ry="1.800" fill="#f3a21c" /><ellipse cx="13.500" cy="18" rx="4" ry="1.800" fill="#f3a21c" /><path d="M5 9L2 14l1 1 3-3M15 9l3 5-1 1-3-3" fill="#151515" /><ellipse cx="10" cy="13" rx="6" ry="6" fill="#151515" /><ellipse cx="10" cy="14" rx="4.500" ry="4.600" fill="#fff" /><ellipse cx="10" cy="6" rx="5" ry="5.500" fill="#151515" /><ellipse cx="8.300" cy="4.500" rx="1.200" ry="1.700" fill="#fff" /><ellipse cx="11.700" cy="4.500" rx="1.200" ry="1.700" fill="#fff" /><ellipse cx="10" cy="7.500" rx="3" ry="1" fill="#f3a21c" /><path d="M4.500 9.500q5.500 3 11 0v2q-5.500 2.600-11 0zM5.500 11h2.500v4l-2.500-.5z" fill="#dc2018" /></>],
  ["旺旺", <><path d="M5 2q2 3 6 3.500c5 .5 8 3 8 7-.5 7-16.500 7.500-18 .5C.5 9.500 2 7 6 6z" fill="#4aa3e2" /><ellipse cx="7" cy="14" rx="4" ry="3" fill="#a9daf6" opacity=".7" /><path d="M11 9v2.500M15 9v2.500" stroke="#123" strokeWidth="1.700" strokeLinecap="round" /></>],
  ["播放器", <path d="M3 1.500L18 10 3 18.500z" fill="#fff" stroke="#45a5ec" strokeWidth="2" strokeLinejoin="round" />],
  ["Firefox", <><circle cx="10.500" cy="9.500" r="8" fill="#2c5fab" /><path d="M2 4l1 3c1-2 3-3 5-2-2 1-2 3 0 4 2 0 3 0 2 2-1 1-3 1-3 2 2 3 8 2 9-2s-1-7-4-9c5 0 8 5 7 10-2 9-15 10-18 1C0 9 1 6 2 4z" fill="#ec7a1a" /><path d="M3 14c4 5 12 4 15-3-1 8-11 12-15 3z" fill="#f8bd2e" /></>],
  ["G", <path d="M18 1L15.500 6H10C7 6 6 9 6 12c0 2.500 1.500 3.500 4 3.300l2-.3.800-2.500H9L10.500 9H18l-2.500 9.500c-7 1.700-14.500.5-14-6C2 4 6 1 18 1z" fill="#d01c18" />],
  ["浏览器", <><circle cx="10" cy="10" r="9.300" fill="#fff" /><circle cx="10" cy="10" r="8.500" fill="#42b53c" /><path d="M5.500 10.500h9.500c0-7-9.500-7-9.500 0 0 5 7 6 9 2.500" fill="none" stroke="#fff" strokeWidth="2.200" /></>],
  ["计算器", <><rect x="3" y=".5" width="14" height="19" rx="1" fill="#c2dcf0" stroke="#6a94b8" /><path d="M5 3h10v4H5z" fill="#f3f9ff" /><path d="M5 10h10M5 13h10M5 16h10" stroke="#4b82b4" strokeWidth="2" strokeDasharray="2 2" /><path d="M13 12h2v5h-2z" fill="#e79a2e" /></>],
];

const running = [
  ["资源管理器", <><path d="M1 3h7l2 2h9v13H1z" fill="#edc865" stroke="#b28d35" /><path d="M2 7h17v10H2z" fill="#fbe69d" /><path d="M5 19v-4q0-2 2-2h6q2 0 2 2v4h-2.500v-3h-5v3z" fill="#7fc0ea" /></>, true],
  ["Visual Studio", <><path d="M10 10C6 5 1 6.500 1 10s5 5 9 0" fill="none" stroke="#3a6fd0" strokeWidth="2.600" /><path d="M10 10c4-5 9-3.500 9 0s-5 5-9 0" fill="none" stroke="#5b3a9c" strokeWidth="2.600" /></>],
  ["MFC", <BlocksIcon />],
  ["画图", <PaletteIcon />],
  ["OMICRON", <WheelIcon />, true],
];

function Taskbar() {
  return (
    <footer className="flex h-[26px] shrink-0 items-center border-t border-[#52708f] bg-gradient-to-r from-[#1e4a72] via-[#1d4268] to-[#152b49] text-white">
      <button aria-label="开始" className="ml-[5px]">
        <svg viewBox="0 0 24 24" className="h-[24px] w-[24px]" aria-hidden="true">
          <circle cx="12" cy="12" r="11.300" fill="#2a6390" stroke="#7ba9c8" /><ellipse cx="12" cy="7" rx="8.500" ry="5" fill="#8fbcd8" opacity=".6" />
          <path d="M6 7q3-1.500 5.500-.3l-1 4.600Q8 10 5 11.300z" fill="#ea5b28" /><path d="M12.500 7.200q3 1.300 5.800 0l-1.200 4.500q-3 1.300-5.600 0z" fill="#8cc63f" />
          <path d="M4.700 12.500q3-1.300 5.500 0l-1.100 4.600q-2.600-1.200-5.600 0z" fill="#49b0ec" /><path d="M11.300 12.900q3 1.300 5.600 0l-1.200 4.500q-2.700 1.300-5.500 0z" fill="#fdc92f" />
        </svg>
      </button>
      <span className="ml-[6px]"><Grip /></span>
      <div className="ml-[15px] flex w-[332px] justify-between">
        {launchers.map(([n, art]) => (
          <button key={n} aria-label={n}><svg viewBox="0 0 20 20" className="h-[20px] w-[20px]" aria-hidden="true">{art}</svg></button>
        ))}
      </div>
      <div className="ml-[11px] flex h-[25px] gap-[2px]">
        {running.map(([n, art, active]) => (
          <button key={n} aria-label={n} className={`flex w-[37px] items-center justify-center rounded-[2px] border border-[#7c93ab] ${active ? "bg-gradient-to-b from-[#b4c3d1] to-[#76899e]" : "bg-gradient-to-b from-[#7791ab] to-[#33506f]"}`}>
            <svg viewBox="0 0 20 20" className="h-[20px] w-[20px]" aria-hidden="true">{art}</svg>
          </button>
        ))}
      </div>
      <div className="ml-auto flex items-center">
        <Grip />
        <span className="ml-[6px] font-['Liberation_Mono',monospace]">CH</span>
        <svg viewBox="0 0 18 18" className="ml-[4px] h-[10px] w-[10px]" aria-hidden="true"><path d="M1 1h16v16H1z" fill="#dbe8f6" stroke="#7ba4d4" strokeWidth="2" /><path d="M5 4v10M8 6h6v5l-3 3M8 6v6" fill="none" stroke="#27569b" strokeWidth="1.500" /></svg>
        <div className="ml-[11px] flex w-[117px] items-center justify-between">
          <svg viewBox="0 0 18 18" className="h-[10px] w-[10px]" aria-hidden="true"><path d="M0 0h18v18H0z" fill="#d31822" /><path d="M4 5l10 9M4 9c4-4 8 3 4 4" fill="none" stroke="#fff" strokeWidth="1.500" /></svg>
          <svg viewBox="0 0 18 18" className="h-[10px] w-[10px]" aria-hidden="true"><path d="M0 0h18v18H0z" fill="#eceff2" /><path d="M4 15V4h9c1 5-2 7-6 7M4 4l10 11" fill="none" stroke="#6c7d8c" strokeWidth="1.500" /></svg>
          <svg viewBox="0 0 20 18" className="h-[10px] w-[10px]" aria-hidden="true"><path d="M1 4l10-1 6 5-6 4-8-3z" fill="#8393a3" /><circle cx="14" cy="13" r="5" fill="#db2e26" /><path d="M12 11l4 4M16 11l-4 4" stroke="#fff" strokeWidth="1.500" /></svg>
          <svg viewBox="0 0 12 18" className="h-[10px] w-[7px]" aria-hidden="true"><path d="M4 1h4v2h3v14H1V3h3z" fill="none" stroke="#fff" strokeWidth="1.800" /><path d="M4 7h4v8H4z" fill="#fff" /></svg>
          <svg viewBox="0 0 18 18" className="h-[9px] w-[10px]" fill="#fff" aria-hidden="true"><path d="M0 13h3v4H0zM4 11h3v6H4zM8 8h3v9H8zM12 5h3v12h-3zM16 2h2v15h-2z" /></svg>
          <svg viewBox="0 0 18 18" className="h-[10px] w-[10px]" aria-hidden="true"><path d="M2 17V2l7 1 3-1v8H4" fill="none" stroke="#fff" strokeWidth="2" /><circle cx="12" cy="13" r="5" fill="#db2e26" /><path d="M10 11l4 4M14 11l-4 4" stroke="#fff" strokeWidth="1.500" /></svg>
          <svg viewBox="0 0 18 18" className="h-[10px] w-[10px]" aria-hidden="true"><path d="M0 6h4l5-5v15l-5-5H0z" fill="#dfe6ed" /><circle cx="12.500" cy="12.500" r="5" fill="#db2e26" /><path d="M9.500 9.500l6 6" stroke="#fff" strokeWidth="1.500" /></svg>
          <svg viewBox="0 0 20 18" className="h-[10px] w-[11px]" aria-hidden="true"><path d="M0 12L10 0l10 10-10 8z" fill="#5eb834" /><circle cx="11" cy="9" r="7" fill="#f5dc24" /><path d="M11 5v8M7 9h8" stroke="#216a1c" strokeWidth="2.500" /></svg>
        </div>
        <div className="ml-[7px] flex w-[42px] flex-col items-center text-center leading-[11px] whitespace-nowrap"><time>17:14</time><time>2017/11/19</time></div>
        <button aria-label="显示桌面" className="ml-[4px] h-[25px] w-[8px] border border-[#53718f] bg-[#2a4663]" />
      </div>
    </footer>
  );
}

export default function App() {
  return (
    <div className="relative flex h-screen flex-col overflow-hidden font-['Noto_Sans','Noto_Sans_CJK_SC',sans-serif] text-[8px] leading-[10px]">
      <PaintWindow />
      <BackWindow />
      <ExplorerWindow />
      <OmicronWindow />
      <Taskbar />
    </div>
  );
}
